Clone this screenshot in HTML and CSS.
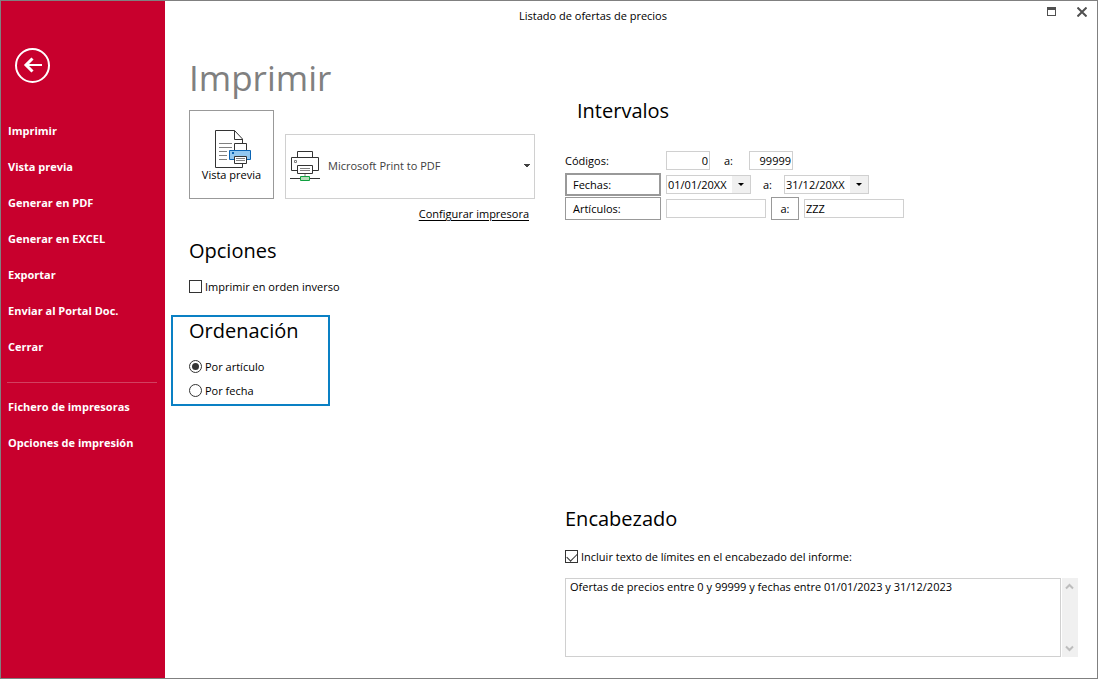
FILE: index.html
```html
<!DOCTYPE html>
<html lang="es">
<head>
<meta charset="utf-8">
<meta name="viewport" content="width=device-width, initial-scale=1">
<title>Listado de ofertas de precios</title>
<link rel="stylesheet" href="styles.css">
</head>
<body>
<div class="window">
  <nav class="sidebar">
    <button class="back" type="button" aria-label="Volver">
      <svg width="35" height="35" viewBox="0 0 35 35" fill="none" stroke="#fff">
        <circle cx="17.5" cy="17.5" r="16.5" stroke-width="2"/>
        <path d="M10 17H27" stroke-width="2"/>
        <path d="M17.5 10.5L11 17L17.5 23.5" stroke-width="3"/>
      </svg>
    </button>
    <ul class="menu">
      <li><a href="#">Imprimir</a></li>
      <li><a href="#">Vista previa</a></li>
      <li><a href="#">Generar en PDF</a></li>
      <li><a href="#">Generar en EXCEL</a></li>
      <li><a href="#">Exportar</a></li>
      <li><a href="#">Enviar al Portal Doc.</a></li>
      <li><a href="#">Cerrar</a></li>
    </ul>
    <hr class="divider">
    <ul class="menu">
      <li><a href="#">Fichero de impresoras</a></li>
      <li><a href="#">Opciones de impresión</a></li>
    </ul>
  </nav>

  <div class="page">
    <header class="titlebar">
      <span class="caption">Listado de ofertas de precios</span>
      <div class="controls">
        <button type="button" aria-label="Maximizar">
          <svg width="10" height="10" viewBox="0 0 10 10"><path d="M0 0H9V9H0ZM1 3V8H8V3Z" fill="#505050" fill-rule="evenodd"/></svg>
        </button>
        <button type="button" aria-label="Cerrar ventana">
          <svg width="10" height="10" viewBox="0 0 10 10"><path d="M.5 .5L9.5 9.5M9.5 .5L.5 9.5" stroke="#505050" stroke-width="2"/></svg>
        </button>
      </div>
    </header>

    <main class="content">
      <div class="column">
        <h1>Imprimir</h1>
        <div class="printer-row">
          <button class="preview" type="button">
            <svg width="41" height="39" viewBox="-4 0 41 39" fill="none" stroke="#333">
              <path d="M.5 1.5H19.5L27.5 10V38.5H.5Z" fill="#fff"/>
              <path d="M19.5 1.5V10.5H27.5"/>
              <path d="M4 14.5H17M4 18.5H17M4 22.5H12M4 26.5H12M4 30.5H12" stroke="#808080"/>
              <path d="M19.5 14.5H31.5V21.5H19.5Z" fill="#fff"/>
              <path d="M14.5 21.5H35.5V30.5H14.5Z" fill="#92c8f0" stroke="#0a64b4"/>
              <path d="M17 23H19V25H17Z" fill="#0a64b4" stroke="none"/>
              <path d="M19.5 27.5H31.5V34.5H19.5Z" fill="#fff"/>
              <path d="M21 29.5H30M21 31.5H30" stroke="#808080"/>
            </svg>
            <span>Vista previa</span>
          </button>
          <div class="printer">
            <svg width="30" height="30" viewBox="0 0 30 30" fill="none" stroke="#333">
              <path d="M7.5 .5H22.5V6.5H7.5Z"/>
              <path d="M7.5 19.5H1.5V6.5H28.5V19.5H22.5"/>
              <path d="M4.5 9.5H6.5V11.5H4.5Z" stroke="#808080"/>
              <path d="M7.5 14.5H22.5V22.5H7.5Z" fill="#fff"/>
              <path d="M10 17.5H20M10 19.5H20M15 23V25" stroke="#808080"/>
              <path d="M0 27.5H30"/>
              <path d="M10.5 25.5H19.5V29.5H10.5Z" fill="#b4dcb8" stroke="#10a040"/>
            </svg>
            <select aria-label="Impresora">
              <option>Microsoft Print to PDF</option>
            </select>
          </div>
        </div>
        <a class="configure" href="#">Configurar impresora</a>

        <section class="options">
          <h2>Opciones</h2>
          <label class="check"><input type="checkbox"><span>Imprimir en orden inverso</span></label>
        </section>

        <section class="sorting">
          <h2>Ordenación</h2>
          <label class="check"><input type="radio" name="orden" checked><span>Por artículo</span></label>
          <label class="check"><input type="radio" name="orden"><span>Por fecha</span></label>
        </section>
      </div>

      <div class="column">
        <section class="ranges">
          <h2>Intervalos</h2>
          <div class="range">
            <label class="name" for="codigo-desde">Códigos:</label>
            <input class="field code" id="codigo-desde" type="text" value="0">
            <label class="to" for="codigo-hasta">a:</label>
            <input class="field code" id="codigo-hasta" type="text" value="99999">
          </div>
          <div class="range">
            <button class="name focused" type="button">Fechas:</button>
            <div class="field date">
              <input type="text" value="01/01/20XX" aria-label="Fecha desde">
              <button type="button" aria-label="Elegir fecha desde"><svg width="6" height="3" viewBox="0 0 6 3"><path d="M0 0H6L3 3Z"/></svg></button>
            </div>
            <label class="to" for="fecha-hasta">a:</label>
            <div class="field date">
              <input id="fecha-hasta" type="text" value="31/12/20XX">
              <button type="button" aria-label="Elegir fecha hasta"><svg width="6" height="3" viewBox="0 0 6 3"><path d="M0 0H6L3 3Z"/></svg></button>
            </div>
          </div>
          <div class="range">
            <button class="name" type="button">Artículos:</button>
            <input class="field article" type="text" aria-label="Artículo desde">
            <button class="until" type="button">a:</button>
            <input class="field article" type="text" value="ZZZ" aria-label="Artículo hasta">
          </div>
        </section>

        <section class="heading">
          <h2>Encabezado</h2>
          <label class="check"><input type="checkbox" checked><span>Incluir texto de límites en el encabezado del informe:</span></label>
          <div class="memo">
            <textarea aria-label="Texto del encabezado">Ofertas de precios entre 0 y 99999 y fechas entre 01/01/2023 y 31/12/2023</textarea>
            <div class="scroll">
              <button type="button" aria-label="Subir"><svg width="9" height="7" viewBox="0 0 9 7"><path d="M1 5.5L4.5 2L8 5.5" fill="none" stroke="#bdbdbd" stroke-width="2"/></svg></button>
              <button type="button" aria-label="Bajar"><svg width="9" height="7" viewBox="0 0 9 7"><path d="M1 1.5L4.5 5L8 1.5" fill="none" stroke="#bdbdbd" stroke-width="2"/></svg></button>
            </div>
          </div>
        </section>
      </div>
    </main>
  </div>
</div>
</body>
</html>
```

FILE: styles.css
```css
* { box-sizing: border-box; }

body {
  margin: 0;
  background: #fff;
  color: #000;
  font: 11px/20px "Open Sans", "Noto Sans", sans-serif;
}

button, input, select, textarea {
  margin: 0;
  padding: 0;
  border: 0;
  border-radius: 0;
  background: none;
  color: inherit;
  font: inherit;
}

svg { display: block; }

h1, h2 { margin: 0; font-weight: 400; }
h1 { color: #808080; font-size: 35px; line-height: 52px; }
h2 { font-size: 20px; line-height: 26px; }

.window {
  display: flex;
  min-height: 100vh;
  border: 1px solid #808080;
}

/* Sidebar */
.sidebar {
  flex: 0 0 164px;
  padding: 47px 8px 0 6px;
  background: #c8002d;
  color: #fff;
}
.back { display: block; margin: 0 0 30px 8px; }
.menu { margin: 0; padding: 0 0 0 1px; list-style: none; }
.menu a {
  display: block;
  color: inherit;
  font-weight: 700;
  line-height: 36px;
  text-decoration: none;
}
.divider {
  margin: 17px 0 6px;
  border: 0;
  border-top: 1px solid #d24060;
}

/* Page */
.page {
  display: flex;
  flex: 1;
  flex-direction: column;
  min-width: 0;
}
.titlebar {
  display: grid;
  grid-template-columns: 1fr 66px;
  align-items: start;
  height: 51px;
  padding: 5px 10px 0 0;
}
.caption { text-align: center; }
.controls {
  display: flex;
  justify-content: flex-end;
  gap: 20px;
  padding-top: 1px;
}
.content {
  display: grid;
  flex: 1;
  grid-template-columns: minmax(346px, 376fr) minmax(340px, 513fr);
  padding: 0 19px 21px 24px;
}
.column { display: flex; flex-direction: column; }

/* Printer */
.printer-row {
  display: flex;
  align-items: flex-end;
  gap: 11px;
  width: 346px;
  margin-top: 6px;
}
.preview {
  display: flex;
  flex-direction: column;
  align-items: center;
  width: 85px;
  height: 89px;
  padding-top: 18px;
  border: 1px solid #999;
  line-height: 14px;
}
.printer {
  display: flex;
  flex: 1;
  align-items: center;
  height: 65px;
  padding: 0 4px 2px;
  border: 1px solid #d0d0d0;
}
.printer select {
  flex: 1;
  height: 30px;
  padding-left: 8px;
  background-image: linear-gradient(to bottom left, #404040 50%, transparent 50%), linear-gradient(to bottom right, #404040 50%, transparent 50%);
  background-position: right 3px center, right center;
  background-repeat: no-repeat;
  background-size: 3px 3px;
  color: #404040;
  appearance: none;
}
.configure {
  width: 340px;
  margin-top: 5px;
  color: inherit;
  text-align: right;
  text-underline-offset: 2px;
}

/* Option groups */
.options { margin-top: 14px; }
.check {
  display: flex;
  align-items: center;
  gap: 3px;
}
.check input {
  display: grid;
  width: 13px;
  height: 13px;
  margin-bottom: 1px;
  border: 1px solid #333;
  appearance: none;
  place-items: center;
}
.check input[type="radio"] { border-radius: 50%; }
.check input[type="radio"]:checked::before {
  width: 7px;
  height: 7px;
  border-radius: 50%;
  background: #333;
  content: "";
}
.check input[type="checkbox"]:checked::before {
  width: 9px;
  height: 5px;
  border: solid #333;
  border-width: 0 0 1px 1px;
  content: "";
  transform: translateY(-1px) rotate(-45deg);
}
.options .check { margin-top: 13px; }
.sorting {
  width: 159px;
  margin: 18px 0 0 -18px;
  padding: 1px 16px 3px;
  border: 2px solid #0a80c4;
}
.sorting .check { margin-top: 4px; }
.sorting h2 + .check { margin-top: 13px; }

/* Ranges */
.ranges h2 { margin: 46px 0 25px 12px; }
.range {
  display: flex;
  align-items: center;
  height: 23px;
  margin-bottom: 1px;
}
.name { width: 96px; margin-right: 5px; }
button.name {
  height: 23px;
  padding-left: 7px;
  border: 1px solid #999;
  text-align: left;
}
button.focused { padding-left: 6px; border-width: 2px; }
.field {
  height: 19px;
  border: 1px solid #d0d0d0;
}
.code { width: 44px; padding-right: 1px; text-align: right; }
.article { width: 100px; padding-left: 1px; }
.date { display: flex; width: 85px; }
.date input {
  flex: 1;
  min-width: 0;
  padding-left: 1px;
}
.date button {
  display: grid;
  width: 18px;
  background: #f0f0f0;
  place-items: center;
}
.to { width: 39px; padding-left: 14px; }
.date + .to { width: 33px; padding-left: 12px; }
.until {
  width: 28px;
  height: 23px;
  margin: 0 5px;
  border: 1px solid #999;
}

/* Report heading */
.heading { margin-top: auto; }
.heading .check { margin-top: 15px; }
.memo {
  display: flex;
  gap: 1px;
  margin-top: 11px;
}
.memo textarea {
  flex: 1;
  height: 79px;
  padding: 0 4px;
  border: 1px solid #d0d0d0;
  line-height: 16px;
  resize: none;
}
.scroll {
  display: flex;
  flex-direction: column;
  justify-content: space-between;
  width: 16px;
  padding: 5px 3px;
  background: #f0f0f0;
}
```
